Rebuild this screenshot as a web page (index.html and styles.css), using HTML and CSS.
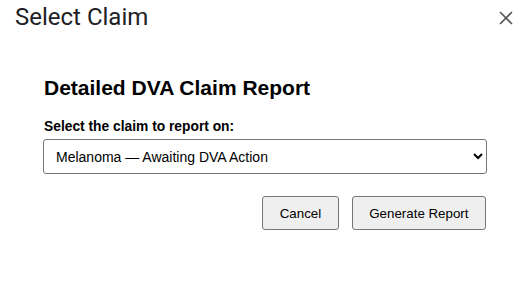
FILE: index.html
```html
<!DOCTYPE html>
<html>
<head>
<meta charset="utf-8">
<link rel="stylesheet" href="styles.css">
</head>
<body>
<div class="dialog">
  <div class="header">
    <div class="title">Select Claim</div>
    <button class="close" aria-label="Close">
      <svg width="14" height="14" viewBox="0 0 14 14"><path d="M1 1L13 13M13 1L1 13" stroke="#555" stroke-width="1.6" fill="none"/></svg>
    </button>
  </div>
  <div class="content">
    <h2 class="heading">Detailed DVA Claim Report</h2>
    <label class="label" for="claim">Select the claim to report on:</label>
    <div class="select-wrap">
      <select id="claim" class="select">
        <option>Melanoma — Awaiting DVA Action</option>
      </select>
    </div>
    <div class="actions">
      <button class="btn">Cancel</button>
      <button class="btn">Generate Report</button>
    </div>
  </div>
</div>
</body>
</html>
```
FILE: styles.css
```css
html, body { margin: 0; padding: 0; background: #fff; }
body { font-family: "Liberation Sans", Arial, sans-serif; width: 524px; height: 297px; overflow: hidden; }
.dialog { display: flex; flex-direction: column; }
.header { display: flex; justify-content: space-between; align-items: flex-start; padding: 2px 10px 0 15px; height: 42px; }
.title { font-family: Roboto, "Open Sans", sans-serif; font-size: 24px; color: #202124; line-height: 30px; }
.close { border: 0; background: none; padding: 0; margin-top: 8px; width: 16px; height: 16px; display: flex; align-items: center; justify-content: center; }
.content { padding: 32px 37px 0 43px; display: flex; flex-direction: column; }
.heading { margin: 0 0 0 1px; font-size: 21px; font-weight: bold; color: #000; line-height: 24px; }
.label { margin: 19px 0 0 1px; font-size: 13.8px; font-weight: bold; color: #000; line-height: 16px; }
.select-wrap { margin-top: 4px; }
.select { width: 444px; height: 35px; font-family: "Liberation Sans", Arial, sans-serif; font-size: 14px; color: #000; border: 1px solid #767676; border-radius: 3px; background: #fff; padding: 0 8px; }
.actions { display: flex; justify-content: flex-end; gap: 13px; margin-top: 22px; padding-right: 1px; }
.btn { height: 34px; font-family: "Liberation Sans", Arial, sans-serif; font-size: 13.333px; color: #000; background: #efefef; border: 1px solid #767676; border-radius: 3px; padding: 0 16.5px; }
```
